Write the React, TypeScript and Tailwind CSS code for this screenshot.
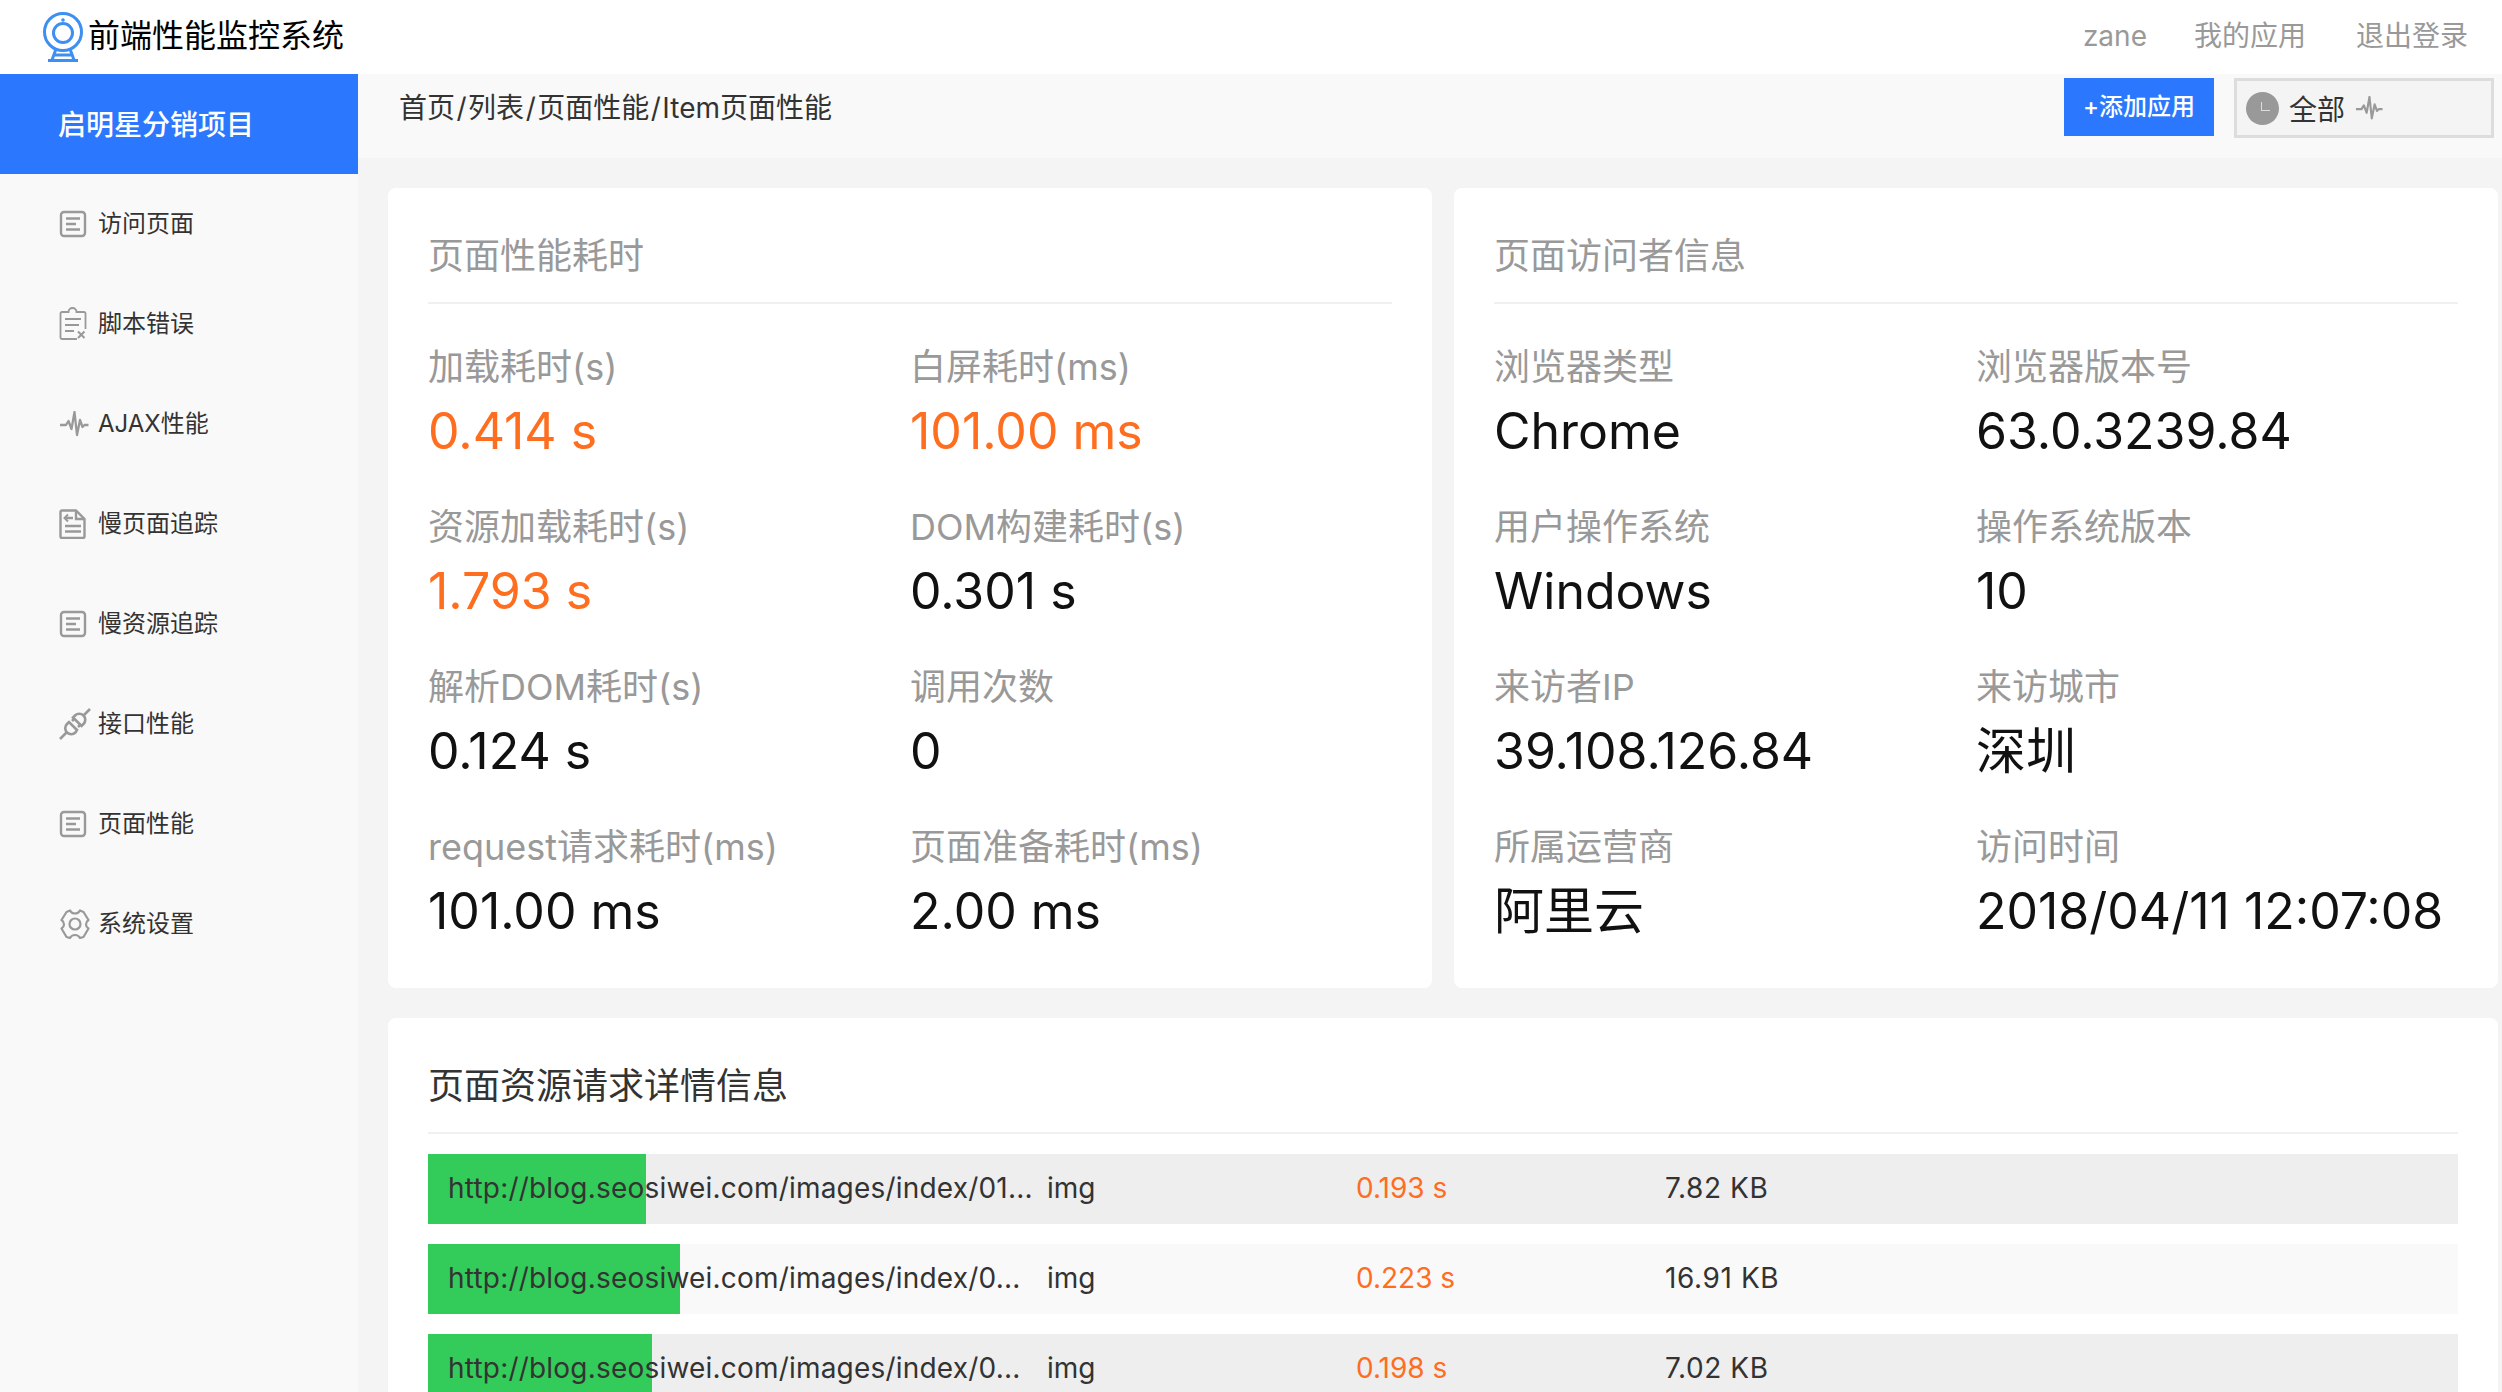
import React from "react";

const ListIcon = () => (
  <svg width="28" height="28" viewBox="0 0 28 28" fill="none" stroke="#999" strokeWidth="2.4">
    <rect x="2" y="2" width="24" height="24" rx="3" />
    <path d="M7 8.500h14M7 14h10M7 19.500h14" />
  </svg>
);

const ClipboardIcon = () => (
  <svg width="28" height="34" viewBox="0 0 28 34" fill="none" stroke="#999" strokeWidth="1.8">
    <path d="M18 32H3a1.500 1.500 0 0 1-1.500-1.500V6.500A1.500 1.500 0 0 1 3 5h6.500a4 4 0 0 1 8 0H25a1.500 1.500 0 0 1 1.500 1.500V22" />
    <path d="M6 12h16M6 18h14M6 24h9" />
    <path d="M19 24.500l6.500 6.500M25.500 24.500l-6.500 6.500" strokeWidth="2" />
  </svg>
);

const PulseIcon = ({ w = 30 }: { w?: number }) => (
  <svg width={w} height={(w * 26) / 30} viewBox="0 0 30 26" fill="none" stroke="#999" strokeWidth="2.300">
    <path d="M1 14h6l2.500-4 3 8 3-17 2.500 23 3-15 2.500 7 2-2h4" strokeLinejoin="round" />
  </svg>
);

const SlowPageIcon = () => (
  <svg width="28" height="30" viewBox="0 0 28 30" fill="none" stroke="#999" strokeWidth="2.400">
    <path d="M3 1.500h14l8.500 8.500v17.500a1.500 1.500 0 0 1-1.500 1.500H3a1.500 1.500 0 0 1-1.500-1.500V3A1.500 1.500 0 0 1 3 1.500z" />
    <path d="M17 2v8h8M6 9h8M6 17h16M6 22.500h16" />
    <path d="M9 5.500L5.500 9 9 12.500" strokeWidth="2" />
  </svg>
);

const PlugIcon = () => (
  <svg width="32" height="32" viewBox="0 0 32 32" fill="none" stroke="#999" strokeWidth="2.600">
    <path d="M31 1l-6 6M1 31l6.500-6.500" />
    <path d="M14 9.500l8.500 8.500 2-2a6 6 0 0 0 0-8.500 6 6 0 0 0-8.500 0z" />
    <path d="M18 22l-8-8-2 2a6 6 0 0 0 0 8.500 6 6 0 0 0 8.500 0z" />
    <path d="M13 13l3-3M19 19l3-3" />
  </svg>
);

const GearIcon = () => (
  <svg width="32" height="30" viewBox="0 0 32 30" fill="none" stroke="#999" strokeWidth="2.200">
    <path d="M11 1.500c1 2 2.500 3 5 3s4-1 5-3l3.500 1.500 5 8c-1.500 1-2.500 2.500-2.500 4.500s1 3 2.500 4l-5 8.500-3.500 1c-1-2-2.500-3-5-3s-4 1-5 3l-3.500-1-5-8.500c1.500-1 2.500-2 2.500-4s-1-3.500-2.500-4.500l5-8z" strokeLinejoin="round" />
    <circle cx="16" cy="15" r="5.500" />
  </svg>
);

const LogoIcon = () => (
  <svg width="42" height="50" viewBox="0 0 42 50" fill="none" stroke="#3d8ff2" strokeWidth="3">
    <circle cx="21" cy="20" r="18.500" />
    <circle cx="21" cy="21" r="9.500" />
    <circle cx="21" cy="8" r="1.800" fill="#3d8ff2" stroke="none" />
    <path d="M14 37l-4 11M28 37l4 11M13 43h16M6 48.500h30" />
  </svg>
);

const menu = [
  { label: "访问页面", icon: <ListIcon /> },
  { label: "脚本错误", icon: <ClipboardIcon /> },
  { label: "AJAX性能", icon: <PulseIcon /> },
  { label: "慢页面追踪", icon: <SlowPageIcon /> },
  { label: "慢资源追踪", icon: <ListIcon /> },
  { label: "接口性能", icon: <PlugIcon /> },
  { label: "页面性能", icon: <ListIcon /> },
  { label: "系统设置", icon: <GearIcon /> },
];

const crumbs = ["首页", "列表", "页面性能", "Item页面性能"];

const perf = [
  { label: "加载耗时(s)", value: "0.414 s", hot: true },
  { label: "白屏耗时(ms)", value: "101.00 ms", hot: true },
  { label: "资源加载耗时(s)", value: "1.793 s", hot: true },
  { label: "DOM构建耗时(s)", value: "0.301 s" },
  { label: "解析DOM耗时(s)", value: "0.124 s" },
  { label: "调用次数", value: "0" },
  { label: "request请求耗时(ms)", value: "101.00 ms" },
  { label: "页面准备耗时(ms)", value: "2.00 ms" },
];

const visitor = [
  { label: "浏览器类型", value: "Chrome" },
  { label: "浏览器版本号", value: "63.0.3239.84" },
  { label: "用户操作系统", value: "Windows" },
  { label: "操作系统版本", value: "10" },
  { label: "来访者IP", value: "39.108.126.84" },
  { label: "来访城市", value: "深圳" },
  { label: "所属运营商", value: "阿里云" },
  { label: "访问时间", value: "2018/04/11 12:07:08" },
];

const resources = [
  { url: "http://blog.seosiwei.com/images/index/01...", time: "0.193 s", size: "7.82 KB", bar: 218, bg: "bg-[#eeeeee]" },
  { url: "http://blog.seosiwei.com/images/index/0...", time: "0.223 s", size: "16.91 KB", bar: 252, bg: "bg-[#f9f9f9]" },
  { url: "http://blog.seosiwei.com/images/index/0...", time: "0.198 s", size: "7.02 KB", bar: 224, bg: "bg-[#eeeeee]" },
];

type Stat = { label: string; value: string; hot?: boolean };

const StatCard = ({ title, items }: { title: string; items: Stat[] }) => (
  <div className="w-[1044px] h-[800px] bg-white rounded-lg px-10 pt-[41px]">
    <div className="text-[36px] leading-[54px] text-[#999999] pb-[19px] border-b-2 border-[#f0f0f0]">{title}</div>
    <div className="grid grid-cols-2">
      {items.map((item, i) => (
        <div key={i} className="pt-[31px] h-[160px]">
          <div className="text-[36px] leading-[64px] text-[#999999]">{item.label}</div>
          <div className={`text-[50px] leading-[64px] ${item.hot ? "text-[#ff6d1f]" : "text-[#111111]"}`}>{item.value}</div>
        </div>
      ))}
    </div>
  </div>
);

export default function App() {
  return (
    <div className="h-screen overflow-hidden bg-[#f4f4f4] font-['Inter','Noto_Sans_CJK_SC',sans-serif]">
      <header className="h-[74px] bg-white flex items-center justify-between pl-[42px] pr-[34px]">
        <div className="flex items-center gap-[4px]">
          <LogoIcon />
          <span className="text-[32px] text-black pb-[3px]">前端性能监控系统</span>
        </div>
        <nav className="flex gap-[50px] text-[28px] text-[#999999] pb-[3px]">
          <span className="-mr-[3px]">zane</span>
          <span>我的应用</span>
          <span>退出登录</span>
        </nav>
      </header>

      <div className="flex h-[1318px]">
        <aside className="w-[358px] shrink-0 bg-[#f9f9f9]">
          <div className="h-[100px] bg-[#2b78ff] flex items-center pl-[58px] pt-[2px] text-[28px] font-medium text-white">启明星分销项目</div>
          {menu.map((m, i) => (
            <div key={i} className="h-[100px] flex items-center pl-[59px]">
              <div className="w-[39px] flex justify-start">{m.icon}</div>
              <span className="text-[24px] text-[#333333]">{m.label}</span>
            </div>
          ))}
        </aside>

        <main className="flex-1 min-w-0">
          <div className="h-[84px] bg-[#f9f9f9] flex justify-between pl-[41px] pr-[8px]">
            <div className="text-[28px] leading-[68px] text-[#333333]">
              {crumbs.map((c, i) => (
                <span key={i}>
                  {i > 0 && <span className="mx-[1.5px]">/</span>}
                  {c}
                </span>
              ))}
            </div>
            <div className="flex gap-5 pt-1">
              <button className="w-[150px] h-[58px] bg-[#2b78ff] text-white text-[24px] font-medium">+添加应用</button>
              <div className="w-[260px] h-[60px] border-[3px] border-[#dddddd] bg-[#f4f4f4] flex items-center pl-[9px]">
                <div className="relative w-[33px] h-[33px] rounded-full bg-[#999999] mr-[10px]">
                  <div className="absolute left-[15px] top-[10px] w-[9px] h-[9px] border-l border-b border-[#dddddd]" />
                </div>
                <span className="text-[28px] text-[#333333] mr-[10px] pt-[3px]">全部</span>
                <PulseIcon w={28} />
              </div>
            </div>
          </div>

          <div className="pl-[30px] pt-[30px]">
            <div className="flex gap-[22px]">
              <StatCard title="页面性能耗时" items={perf} />
              <StatCard title="页面访问者信息" items={visitor} />
            </div>
            <div className="mt-[30px] w-[2110px] bg-white rounded-lg px-10 pt-[41px] pb-10">
              <div className="text-[36px] leading-[54px] text-[#333333] pb-[19px] border-b-2 border-[#f0f0f0]">页面资源请求详情信息</div>
              <div className="mt-5 flex flex-col gap-5">
                {resources.map((r, i) => (
                  <div key={i} className={`relative h-[70px] ${r.bg}`}>
                    <div className="absolute left-0 top-0 h-full bg-[#33cb59]" style={{ width: r.bar }} />
                    <div className="relative h-full flex items-center pl-5 pb-[2px] text-[28px] text-[#333333] whitespace-nowrap">
                      <div className="w-[599px] tracking-[0.2px]">{r.url}</div>
                      <div className="w-[309px]">img</div>
                      <div className="w-[309px] text-[#ff6d1f]">{r.time}</div>
                      <div className="tracking-[0.6px]">{r.size}</div>
                    </div>
                  </div>
                ))}
              </div>
            </div>
          </div>
        </main>
      </div>
    </div>
  );
}
